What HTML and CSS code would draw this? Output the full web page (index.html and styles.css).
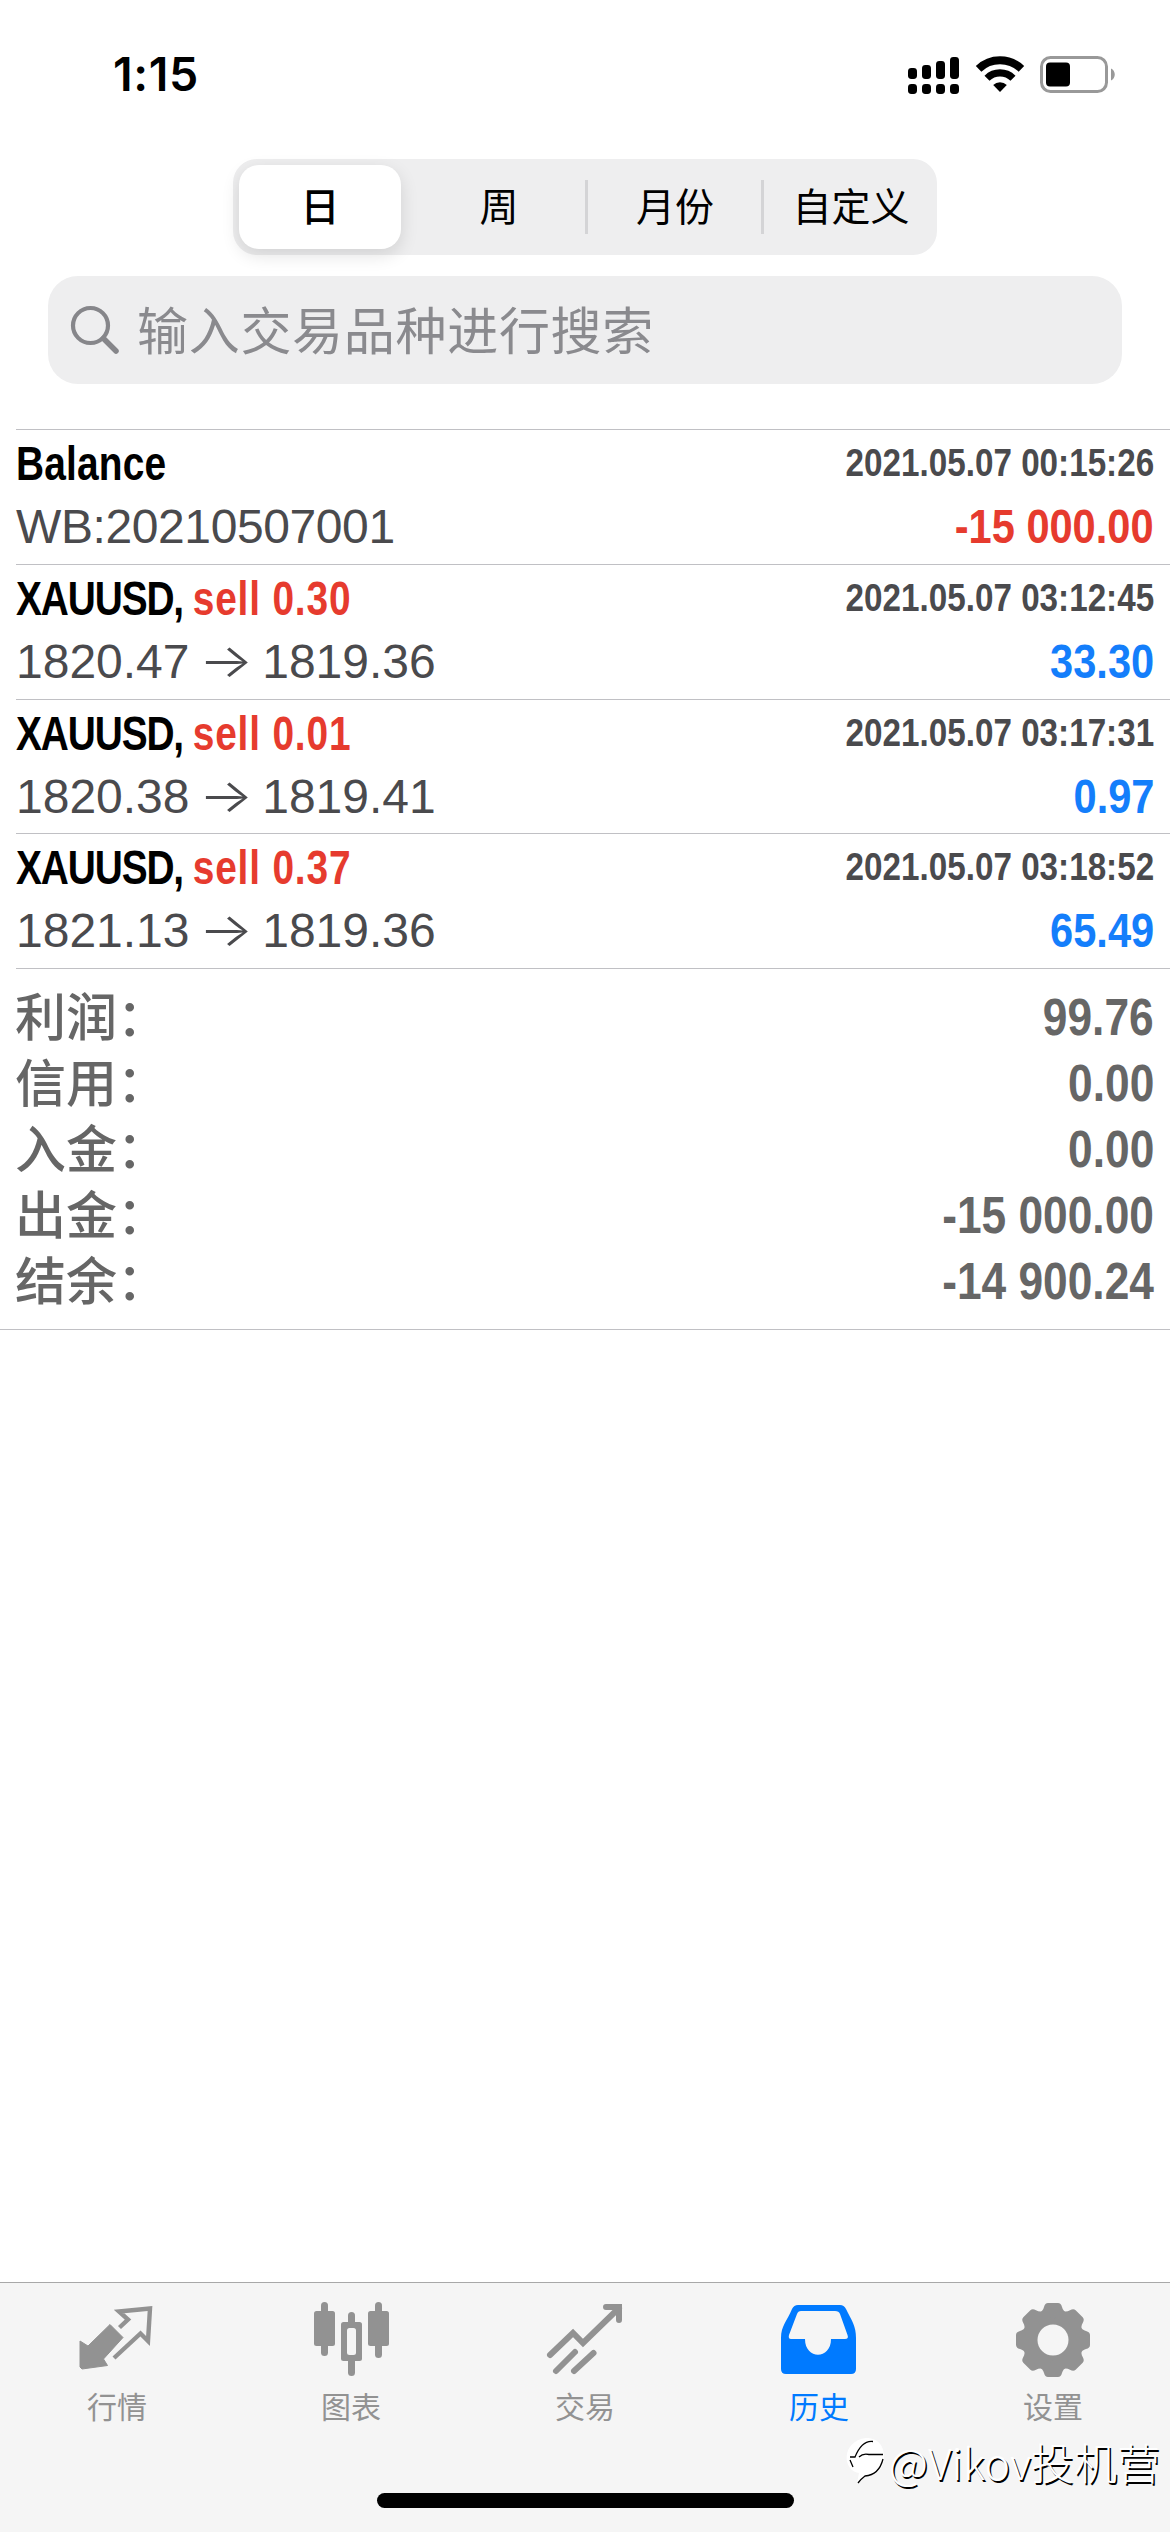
FILE: index.html
```html
<!DOCTYPE html>
<html lang="zh-CN">
<head>
<meta charset="utf-8">
<title>历史</title>
<link rel="stylesheet" href="styles.css">
</head>
<body>
<div class="screen">
  <header class="status">
    <span class="time">1:15</span>
    <span class="status-icons">
      <svg class="signal" width="52" height="38" viewBox="0 0 52 38"><rect x="0" y="12" width="9" height="11" rx="3.4"/><rect x="14" y="9" width="9" height="14" rx="3.4"/><rect x="28" y="5" width="9" height="18" rx="3.4"/><rect x="42" y="1" width="9" height="22" rx="3.4"/><rect x="0" y="28" width="9" height="10" rx="3.4"/><rect x="14" y="28" width="9" height="10" rx="3.4"/><rect x="28" y="28" width="9" height="10" rx="3.4"/><rect x="42" y="28" width="9" height="10" rx="3.4"/></svg>
      <svg class="wifi" width="48" height="38" viewBox="0 0 48 38"><g fill="none" stroke="#000" stroke-width="8"><path d="M2.6 12.8a31 31 0 0 1 42.8 0"/><path d="M11 22.2a18.6 18.6 0 0 1 26 0" stroke-width="7.200"/></g><path d="M17.2 29a9.6 9.6 0 0 1 13.6 0L24 36Z"/></svg>
      <svg class="battery" width="76" height="38" viewBox="0 0 76 38"><rect x="1.5" y="1.500" width="65" height="34" rx="9" fill="none" stroke="#999" stroke-width="3"/><rect x="6" y="6.500" width="24" height="24" rx="4"/><path d="M71 12.500c5 2 5 10 0 12Z" fill="#999"/></svg>
    </span>
  </header>

  <nav class="segments">
    <span class="segment active">日</span>
    <span class="segment">周</span>
    <span class="segment divided">月份</span>
    <span class="segment divided">自定义</span>
  </nav>

  <div class="search">
    <svg width="48" height="48" viewBox="0 0 48 48" fill="none" stroke="#86868a"><circle cx="19.500" cy="19.500" r="17.500" stroke-width="4.200"/><path d="M32.500 32.500 45 45" stroke-width="5.500" stroke-linecap="round"/></svg>
    <span>输入交易品种进行搜索</span>
  </div>

  <main class="deals">
    <section class="deal">
      <div class="line"><span class="symbol">Balance</span><span class="date">2021.05.07 00:15:26</span></div>
      <div class="line"><span class="detail comment">WB:20210507001</span><span class="amount loss">-15 000.00</span></div>
    </section>
    <section class="deal">
      <div class="line"><span class="symbol"><span class="ticker">XAUUSD, </span><span class="side">sell 0.30</span></span><span class="date">2021.05.07 03:12:45</span></div>
      <div class="line"><span class="detail">1820.47 <span class="arrow">→</span> 1819.36</span><span class="amount gain">33.30</span></div>
    </section>
    <section class="deal">
      <div class="line"><span class="symbol"><span class="ticker">XAUUSD, </span><span class="side">sell 0.01</span></span><span class="date">2021.05.07 03:17:31</span></div>
      <div class="line"><span class="detail">1820.38 <span class="arrow">→</span> 1819.41</span><span class="amount gain">0.97</span></div>
    </section>
    <section class="deal">
      <div class="line"><span class="symbol"><span class="ticker">XAUUSD, </span><span class="side">sell 0.37</span></span><span class="date">2021.05.07 03:18:52</span></div>
      <div class="line"><span class="detail">1821.13 <span class="arrow">→</span> 1819.36</span><span class="amount gain">65.49</span></div>
    </section>
  </main>

  <section class="summary">
    <div class="total"><span class="label">利润：</span><span class="sum">99.76</span></div>
    <div class="total"><span class="label">信用：</span><span class="sum">0.00</span></div>
    <div class="total"><span class="label">入金：</span><span class="sum">0.00</span></div>
    <div class="total"><span class="label">出金：</span><span class="sum">-15 000.00</span></div>
    <div class="total"><span class="label">结余：</span><span class="sum">-14 900.24</span></div>
  </section>

  <footer class="tabbar">
    <div class="tabs">
      <div class="tab">
        <svg width="78" height="75" viewBox="0 0 78 75"><path d="M2 35 10 40 32 18.500 45 31.500 25.500 53 29.500 59.500 4 63 2 61Z" fill="#929292" stroke="#929292" stroke-width="1" stroke-linejoin="round"/><path d="M41.500 21.500 50 13.500 41 5.500 72 2.500 70 35 62.500 27.500 36 52" fill="none" stroke="#929292" stroke-width="4.400"/></svg>
        <span>行情</span>
      </div>
      <div class="tab">
        <svg width="78" height="75" viewBox="0 0 78 75" fill="#929292"><rect x="9" y="-4" width="7" height="54" rx="3.500"/><rect x="2" y="5" width="21" height="35" rx="2.500"/><rect x="36" y="6" width="7" height="64" rx="3.500"/><rect x="29" y="16" width="21" height="39" rx="2.500"/><rect x="35" y="22" width="9" height="27" rx="2.500" fill="#f5f5f5"/><rect x="63" y="-4" width="7" height="56" rx="3.500"/><rect x="56" y="5" width="21" height="35" rx="2.500"/></svg>
        <span>图表</span>
      </div>
      <div class="tab">
        <svg width="78" height="75" viewBox="0 0 78 75" fill="none" stroke="#929292" stroke-width="6" stroke-linecap="round" stroke-linejoin="miter"><path d="M4 49 27 27 37 37 73 2"/><path d="M60 1H73V14" stroke-linejoin="miter"/><path d="M10 65 29 46M28 65 47.500 47"/></svg>
        <span>交易</span>
      </div>
      <div class="tab current">
        <svg width="78" height="75" viewBox="0 0 78 75"><path fill="#007aff" fill-rule="evenodd" d="M18-1H60Q64-1 66 3C72 15 76 20 76 32V63Q76 68 71 68H6Q1 68 1 63V32C1 20 7 15 12 3Q14-1 18-1ZM21 5Q18 5 17 8L9 29Q8 33 11 33H25C25 54 51 54 51 33H65Q69 33 67.500 29L60 8Q59 5 55 5Z"/></svg>
        <span>历史</span>
      </div>
      <div class="tab">
        <svg width="78" height="75" viewBox="-39 -34 78 75"><g fill="#929292"><path id="tooth" d="M-14-27Q-10-29-9-33Q-8-37-5-37H5Q8-37 9-33Q10-29 14-27V0H-14Z"/><use href="#tooth" transform="rotate(45)"/><use href="#tooth" transform="rotate(90)"/><use href="#tooth" transform="rotate(135)"/><use href="#tooth" transform="rotate(180)"/><use href="#tooth" transform="rotate(225)"/><use href="#tooth" transform="rotate(270)"/><use href="#tooth" transform="rotate(315)"/></g><circle r="15.500" fill="#f5f5f5"/></svg>
        <span>设置</span>
      </div>
    </div>
    <div class="home"></div>
  </footer>

  <div class="watermark">
    <svg width="44" height="48" viewBox="0 0 44 48"><path d="M21 1C35 1 39 11 39 20C39 33 30 39 21 39Q15 40 12 46L14 36C-3 34-4 4 21 1Z" fill="#fff"/><path d="M5 20H10Q17 3 28 4.500M14 20Q18 16 24 17.500H38M5 23 8 30M38 22Q34 38 20 39Q16 42 13 46" fill="none" stroke="#000" stroke-width="1.300"/></svg>
    <span>@Vikov投机营</span>
  </div>
</div>
</body>
</html>
```
FILE: styles.css
```css
* { box-sizing: border-box; }

body {
  margin: 0;
  background: #fff;
  color: #000;
  font-family: "Liberation Sans", "Noto Sans CJK SC", sans-serif;
}

.screen {
  position: relative;
  display: flex;
  flex-direction: column;
  width: 1170px;
  height: 2532px;
  overflow: hidden;
}

svg { display: block; overflow: visible; flex: none; }

.status {
  display: flex;
  justify-content: space-between;
  align-items: center;
  height: 149px;
  padding: 0 54px 0 113px;
}

.time {
  font: 600 46.500px/1 Inter, sans-serif;
  letter-spacing: 0.600px;
}

.status-icons { display: flex; gap: 16px; }

.segments {
  display: grid;
  grid-template-columns: 176px 176px 176px 176px;
  align-self: center;
  width: 704px;
  height: 96px;
  margin-top: 10px;
  border-radius: 24px;
  background: #eeeeef;
}

.segment {
  display: flex;
  justify-content: center;
  align-items: center;
  padding: 0 0 5px 4px;
  font: 400 39px/1 "Noto Sans CJK SC", sans-serif;
}

.segment.active {
  margin: 6px 8px 6px 6px;
  padding-left: 0;
  border-radius: 20px;
  background: #fff;
  font-weight: 500;
  box-shadow: 0 6px 18px rgba(0, 0, 0, 0.12);
}

.segment.divided {
  background: linear-gradient(#d4d4d6, #d4d4d6) 0 50% / 3px 54px no-repeat;
}

.search {
  display: flex;
  align-items: center;
  gap: 18px;
  height: 108px;
  margin: 21px 48px 0;
  padding: 0 23px;
  border-radius: 30px;
  background: #eeeeef;
  color: #8a8a8e;
  font: 400 51px/1 "Noto Sans CJK SC", sans-serif;
  letter-spacing: 0.700px;
}

.search span { padding-bottom: 4px; }

.deals {
  margin: 45px 0 0 16px;
  border-bottom: 1px solid #c0c0c4;
}

.deal {
  height: 134.750px;
  padding: 2px 16px 0 0;
  border-top: 1px solid #c0c0c4;
}

.line {
  display: flex;
  justify-content: space-between;
  height: 63px;
  line-height: 63px;
}

/* Condensed bold face */
.symbol, .date, .amount, .sum {
  font-family: "Liberation Sans", sans-serif;
  font-weight: 700;
  white-space: pre;
  transform: scaleX(0.855);
  transform-origin: right;
}

.symbol { transform: scaleX(0.81); transform-origin: left; letter-spacing: 0.200px; }
.ticker { letter-spacing: -1.400px; }
.side { color: #e63b2e; letter-spacing: 1px; }

.symbol, .amount, .detail { font-size: 48px; }
.date { font-size: 39px; line-height: 62px; color: #4a4a4d; transform: scaleX(0.852); }
.detail { color: #4a4a4d; white-space: pre; }
.comment { letter-spacing: -0.400px; }

.arrow {
  display: inline-block;
  width: 46px;
  font: 300 47px/1 Inter, sans-serif;
  text-align: center;
  transform: translateY(-1px) scaleX(1.22);
}

.loss { color: #e63b2e; }
.gain { color: #147efb; }
.amount { transform: scaleX(0.866); }

.summary {
  height: 361px;
  padding: 17px 16px 0 15px;
  border-bottom: 1px solid #c0c0c4;
  color: #666;
}

.total {
  display: flex;
  justify-content: space-between;
  height: 66px;
  font-size: 51px;
  line-height: 63px;
}

.label {
  font: 500 51px/56px "Noto Sans CJK SC", sans-serif;
}

.sum { transform: scaleX(0.868); }

.tabbar {
  display: flex;
  flex-direction: column;
  justify-content: space-between;
  align-items: center;
  height: 250px;
  margin-top: auto;
  padding-bottom: 24px;
  border-top: 1px solid #a8a8a8;
  background: #f5f5f5;
}

.tabs { display: flex; width: 100%; }

.tab {
  display: flex;
  flex: 1;
  flex-direction: column;
  align-items: center;
  padding-top: 23px;
  color: #929292;
  font: 400 30px/48px "Noto Sans CJK SC", sans-serif;
}

.current { color: #007aff; }

.home {
  width: 417px;
  height: 15px;
  border-radius: 8px;
  background: #000;
}

.watermark {
  position: absolute;
  right: 10px;
  bottom: 42px;
  display: flex;
  align-items: center;
  color: #fff;
  font: 300 43px/58px "Noto Sans CJK SC", sans-serif;
  text-shadow: 1.500px 1.500px 0 #000;
}
```
